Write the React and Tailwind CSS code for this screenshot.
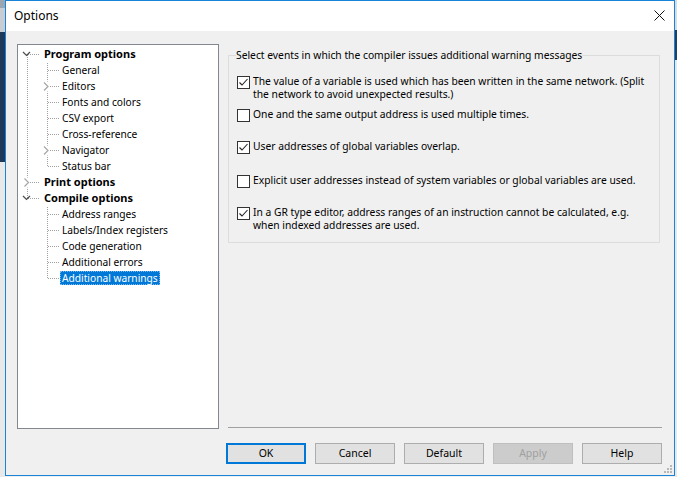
import React from "react";

const FONT = { fontFamily: '"Noto Sans", "Open Sans", sans-serif' };

const treeRows = [
  { label: "Program options", level: 0, bold: true },
  { label: "General", level: 1 },
  { label: "Editors", level: 1 },
  { label: "Fonts and colors", level: 1 },
  { label: "CSV export", level: 1 },
  { label: "Cross-reference", level: 1 },
  { label: "Navigator", level: 1 },
  { label: "Status bar", level: 1 },
  { label: "Print options", level: 0, bold: true },
  { label: "Compile options", level: 0, bold: true },
  { label: "Address ranges", level: 1 },
  { label: "Labels/Index registers", level: 1 },
  { label: "Code generation", level: 1 },
  { label: "Additional errors", level: 1 },
  { label: "Additional warnings", level: 1, selected: true },
];

function TreeLines() {
  const c = (i) => 9.5 + 16 * i;
  const dash = { stroke: "#a0a0a0", strokeWidth: 1, strokeDasharray: "1 1", shapeRendering: "crispEdges" };
  const h = (i, x1, x2) => <line key={"h" + i + x1} x1={x1} y1={c(i)} x2={x2} y2={c(i)} style={dash} />;
  return (
    <svg className="absolute left-0 top-0 pointer-events-none" width="200" height="260">
      <line x1="9.5" y1={c(0)} x2="9.5" y2={c(9)} style={dash} />
      {[0, 8, 9].map((i) => h(i, 10, 22))}
      <line x1="29.5" y1={c(0) + 8} x2="29.5" y2={c(7)} style={dash} />
      {[1, 2, 3, 4, 5, 6, 7].map((i) => h(i, 30, 41))}
      <line x1="29.5" y1={c(9) + 8} x2="29.5" y2={c(14)} style={dash} />
      {[10, 11, 12, 13, 14].map((i) => h(i, 30, 41))}
      {[0, 9].map((i) => (
        <polyline key={"d" + i} points={`5,${c(i) - 2.5} 8.5,${c(i) + 1} 12,${c(i) - 2.5}`} fill="none" stroke="#4d4d4d" strokeWidth="1.2" />
      ))}
      <rect x="5" y={c(8) - 5} width="7" height="10" fill="white" />
      <polyline points={`6.5,${c(8) - 4} 10.5,${c(8)} 6.5,${c(8) + 4}`} fill="none" stroke="#a6a6a6" strokeWidth="1.2" />
      {[2, 6].map((i) => (
        <g key={"r" + i}>
          <rect x="25" y={c(i) - 5} width="7" height="10" fill="white" />
          <polyline points={`26,${c(i) - 4} 30,${c(i)} 26,${c(i) + 4}`} fill="none" stroke="#a6a6a6" strokeWidth="1.2" />
        </g>
      ))}
    </svg>
  );
}

function Tree() {
  return (
    <div className="relative w-[202px] h-[385px] shrink-0 bg-white border border-[#828790]">
      <TreeLines />
      <div className="relative flex flex-col">
        {treeRows.map((r) => (
          <div key={r.label} className="h-[16px] flex items-center pt-[1px]">
            <span
              className={
                (r.level === 0 ? "ml-[24px] " : "ml-[42px] ") +
                (r.bold ? "font-bold text-[11px] " : "text-[10.2px] ") +
                (r.selected
                  ? "bg-[#0078d7] text-white border border-dotted border-[#7ab8ef] px-[1px] leading-[12px] h-[14px] "
                  : "text-black px-[2px] leading-[14px] ") +
                "whitespace-nowrap"
              }
            >
              {r.label}
            </span>
          </div>
        ))}
      </div>
    </div>
  );
}

function Check({ checked }) {
  return (
    <span className="w-[13px] h-[13px] shrink-0 border border-[#333333] bg-white flex items-center justify-center mt-[1px]">
      {checked && (
        <svg width="11" height="11" viewBox="0 0 11 11">
          <polyline points="1.5,5.5 4,8 9.5,2" fill="none" stroke="#222222" strokeWidth="1.1" />
        </svg>
      )}
    </span>
  );
}

function Row({ checked, children, className }) {
  return (
    <div className={"flex items-start gap-[3px] " + className}>
      <Check checked={checked} />
      <span className="text-[10.3px] leading-[13px] text-black">{children}</span>
    </div>
  );
}

function Btn({ children, primary, disabled }) {
  const cls = primary
    ? "border-2 border-[#0078d7] bg-[#e1e1e1] text-black"
    : disabled
    ? "border border-[#bfbfbf] bg-[#cccccc] text-[#a0a0a0]"
    : "border border-[#adadad] bg-[#e1e1e1] text-black";
  return (
    <div className={"w-[80px] h-[21px] flex items-center justify-center text-[10.5px] " + cls}>{children}</div>
  );
}

export default function App() {
  return (
    <div className="flex w-[677px] h-[477px] overflow-hidden bg-[#f0f0f0]" style={FONT}>
      <div className="w-[5px] shrink-0 flex flex-col">
        <div className="h-[8px] bg-[#9aa6b2]" />
        <div className="h-[24px] bg-[#c8cdd3]" />
        <div className="h-[130px] bg-[#1f3a58]" />
        <div className="flex-1 bg-[#e8e8e8]" />
      </div>
      <div className="relative w-[670px] h-[476px] shrink-0 flex flex-col border border-[#1883d7] bg-[#f0f0f0]">
        <div className="h-[30px] shrink-0 bg-white flex items-center justify-between pl-[8px] pr-[9px]">
          <span className="text-[12px] text-black">Options</span>
          <svg width="11" height="11" viewBox="0 0 11 11" className="mb-[1px]">
            <line x1="0.5" y1="0.5" x2="10.5" y2="10.5" stroke="#111" strokeWidth="1" />
            <line x1="10.5" y1="0.5" x2="0.5" y2="10.5" stroke="#111" strokeWidth="1" />
          </svg>
        </div>
        <div className="flex flex-col pt-[13px] pl-[11px]">
          <div className="flex">
            <Tree />
            <div className="ml-[9px] w-[434px] flex flex-col">
              <fieldset className="w-[432px] border border-[#dcdcdc] pl-[8px] pr-[2px] pb-[10px] mt-[3px]">
                <legend className="text-[10.3px] leading-[16px] text-black -ml-[1px] px-0">
                  Select events in which the compiler issues additional warning messages
                </legend>
                <Row checked className="mt-[12px]">
                  The value of a variable is used which has been written in the same network. (Split the network to avoid unexpected results.)
                </Row>
                <Row className="mt-[7px]">One and the same output address is used multiple times.</Row>
                <Row checked className="mt-[18px]">User addresses of global variables overlap.</Row>
                <Row className="mt-[20px]">Explicit user addresses instead of system variables or global variables are used.</Row>
                <Row checked className="mt-[18px]">
                  In a GR type editor, address ranges of an instruction cannot be calculated, e.g. when indexed addresses are used.
                </Row>
              </fieldset>
              <div className="mt-auto h-px bg-[#a0a0a0] mb-[1px]" />
            </div>
          </div>
          <div className="flex gap-[9px] mt-[14px] ml-[209px]">
            <Btn primary>OK</Btn>
            <Btn>Cancel</Btn>
            <Btn>Default</Btn>
            <Btn disabled>Apply</Btn>
            <Btn>Help</Btn>
          </div>
        </div>
        <svg className="absolute right-[2px] bottom-[2px]" width="10" height="10" viewBox="0 0 10 10">
          {[[8, 2], [5, 5], [8, 5], [2, 8], [5, 8], [8, 8]].map(([x, y]) => (
            <rect key={x + "-" + y} x={x} y={y} width="2" height="2" fill="#b8b8b8" />
          ))}
        </svg>
      </div>
      <div className="w-[2px] shrink-0 flex flex-col">
        <div className="h-[30px] bg-[#d8dde2]" />
        <div className="h-[30px] bg-[#243f5c]" />
        <div className="flex-1 bg-[#e8e8e8]" />
      </div>
    </div>
  );
}
